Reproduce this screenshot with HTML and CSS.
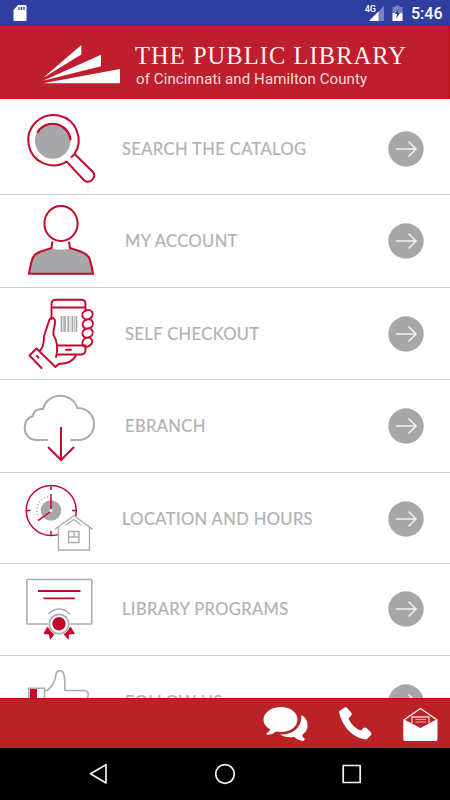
FILE: index.html
```html
<!DOCTYPE html>
<html lang="en">
<head>
<meta charset="utf-8">
<title>The Public Library</title>
<link rel="stylesheet" href="styles.css">
</head>
<body>
<div class="screen">
  <div class="status">
    <svg class="sd" width="14" height="18" viewBox="0 0 14 18"><path d="M5 1h7.500q1 0 1 1v14q0 1-1 1h-11q-1 0-1-1V6z" fill="#fff"/><path d="M6 3v3M8.500 3v3M11 3v3" stroke="#303f9f" stroke-width="1.300"/></svg>
    <span class="net">4G</span>
    <svg class="signal" width="15" height="15" viewBox="0 0 15 15"><path d="M0 15L15 0v15z" fill="#7983c2"/><path d="M0 15L9.500 5.500V15z" fill="#fff"/></svg>
    <svg class="battery" width="11" height="16" viewBox="0 0 11 16"><path d="M.5 2h3V.5h4V2h3v14H.5z" fill="#7983c2"/><path d="M.5 8h10v8H.5z" fill="#fff"/><path d="M7 3L3 9h2.200L4 14l4-6H5.800z" fill="#303f9f"/></svg>
    <span class="clock">5:46</span>
  </div>
  <header class="brand">
    <svg class="mark" width="78" height="40" viewBox="43 45 78 40" fill="#fff"><path d="M43 78L81.300 45v9.500z"/><path d="M43 80.700L101 54.800v11.400z"/><path d="M43 83.300L120 69v14.300z"/></svg>
    <div class="brand-text">
      <div class="brand-name">THE PUBLIC LIBRARY</div>
      <div class="brand-sub">of Cincinnati and Hamilton County</div>
    </div>
  </header>
  <main class="menu">
    <div class="row search">
      <svg class="icon" width="110" height="95" viewBox="0 99 110 95"><g fill="none" stroke="#c4082c" stroke-width="2"><circle cx="52.700" cy="141" r="17.800" fill="#a7a7a9" stroke="none"/><path d="M37.800 132A17.800 17.800 0 0 1 70.500 139.500" stroke-width="2.200" stroke-linecap="round"/><path d="M71 157.500L74.300 154.300A25.200 25.200 0 1 0 66.700 161.600L84 180.200Q88 183.500 92 180Q96 176 93 172L74.800 154.300" stroke-linejoin="round"/></g></svg>
      <span class="label">SEARCH THE CATALOG</span>
      <svg class="go" width="36" height="36" viewBox="0 0 36 36"><circle cx="18" cy="18" r="17.700"/><path d="M8 18h20M20.500 10.500L28 18l-7.500 7.500"/></svg>
    </div>
    <div class="row account">
      <svg class="icon" width="110" height="92" viewBox="0 195 110 92"><path d="M51 248.500C46 251.500 36 251.500 33 258Q31 262 29 273.500H93Q91 262 89 258C85 251.500 75 251.500 70 248.500Q61 251 51 248.500" fill="#a7a7a9"/><g fill="none" stroke="#c4082c" stroke-width="2"><ellipse cx="61" cy="223.500" rx="16.600" ry="17.500"/><path d="M52.500 241.500L51.500 248C45 250.500 36 251 33 257.500Q31 262 29 273.700H93Q91 262 89 257.500C85 251 76 250.500 70 248L69 241.500"/></g></svg>
      <span class="label">MY ACCOUNT</span>
      <svg class="go" width="36" height="36" viewBox="0 0 36 36"><circle cx="18" cy="18" r="17.700"/><path d="M8 18h20M20.500 10.500L28 18l-7.500 7.500"/></svg>
    </div>
    <div class="row checkout">
      <svg class="icon" width="110" height="91" viewBox="0 288 110 91"><g fill="none" stroke="#c4082c" stroke-width="1.900" stroke-linecap="round" stroke-linejoin="round"><path d="M51.500 319V304Q51.500 299.700 56 299.700H81Q85.500 299.700 85.500 304V311M51.500 307.500H85.500M57.500 345.500H85.500M85.500 347V350Q85.500 354.500 81 354.500H57M66 349.700H71"/><ellipse cx="87.500" cy="314.700" rx="5.300" ry="4.500" transform="rotate(-25 87.500 314.700)"/><ellipse cx="87.800" cy="324" rx="5.300" ry="4.500" transform="rotate(-25 87.800 324)"/><ellipse cx="87.600" cy="333" rx="5.300" ry="4.500" transform="rotate(-25 87.600 333)"/><ellipse cx="87.300" cy="342.200" rx="5.200" ry="4.200" transform="rotate(-35 87.300 342.200)"/><path d="M56 357C58 349 58 342 53.500 335C52.500 331 55.500 325 55 321Q54.500 317.500 51.500 318Q50 318 49 321L44 336Q44 347 40 350.500M41.500 368L29.500 355.500L36.500 348.500L55.500 367L59 363.800C67 364 73 361 76 355.500M37 356L38.500 357.500"/></g><path d="M61.500 316v16M65 316v16M68.200 316v16M72.500 316v16M76.500 316v16" stroke="#aaa" stroke-width="1.800"/><path d="M63.500 316v16M70.200 316v16M74.500 316v16" stroke="#bbb" stroke-width=".8"/></svg>
      <span class="label">SELF CHECKOUT</span>
      <svg class="go" width="36" height="36" viewBox="0 0 36 36"><circle cx="18" cy="18" r="17.700"/><path d="M8 18h20M20.500 10.500L28 18l-7.500 7.500"/></svg>
    </div>
    <div class="row ebranch">
      <svg class="icon" width="110" height="92" viewBox="0 380 110 92"><g fill="none" stroke-width="2"><path d="M48 440H37C28.500 440 24.700 434 24.700 428C24.700 422 28 417.500 33 416C33.500 411 37.500 408.500 43 409C45 401 52 395.700 60.500 395.700C68 395.700 75 400.500 77.300 408C87 408 94 414.500 94 424C94 433.500 87 440 79 440H70.500" stroke="#acacae"/><path d="M61 427V460M48 447L61 460L74 447" stroke="#c4082c"/></g></svg>
      <span class="label">EBRANCH</span>
      <svg class="go" width="36" height="36" viewBox="0 0 36 36"><circle cx="18" cy="18" r="17.700"/><path d="M8 18h20M20.500 10.500L28 18l-7.500 7.500"/></svg>
    </div>
    <div class="row location">
      <svg class="icon" width="110" height="90" viewBox="0 473 110 90"><circle cx="51" cy="510.500" r="10.300" fill="#a7a7a9"/><g fill="none" stroke="#c4082c" stroke-width="1.500"><circle cx="51.200" cy="510.500" r="25"/><path d="M51 485.500v4.500M51 531v4.500M26 510.500h4.500M72 510.500h4.500M51 494v15M50 512L38 520.700"/></g><path d="M48 496.700A14 14 0 0 0 38.500 517" fill="none" stroke="#b0b0b2" stroke-width="1.500" stroke-dasharray="1.200 2"/><circle cx="51" cy="510.500" r="1.500" fill="#fff"/><path d="M58.500 526L74 515L89.500 526V550H58.500z" fill="#fff"/><g fill="none" stroke="#acacae" stroke-width="1.400"><path d="M54.500 529.500L74 515.500L92.800 529.500M58.500 527V550H89.500V527M66 525L74 519.500L81 525M68.500 531.500H79V542.500H68.500zM74 531.500V537M68.500 537H79"/></g></svg>
      <span class="label">LOCATION AND HOURS</span>
      <svg class="go" width="36" height="36" viewBox="0 0 36 36"><circle cx="18" cy="18" r="17.700"/><path d="M8 18h20M20.500 10.500L28 18l-7.500 7.500"/></svg>
    </div>
    <div class="row programs">
      <svg class="icon" width="110" height="91" viewBox="0 564 110 91"><rect x="26.800" y="579.500" width="65" height="44.500" rx="1" fill="none" stroke="#acacae" stroke-width="1.600"/><path d="M38 591H80.500M43.500 598.300H75" stroke="#c4082c" stroke-width="1.800"/><path d="M47 627L43.300 634L49 634.500L50 640L57 631zM71 627L75 634L69 634.500L68.500 640L61 631z" fill="#c4082c"/><circle cx="59" cy="624" r="11" fill="#fff"/><path d="M48.500 614Q59 604 70 614" fill="none" stroke="#acacae" stroke-width="1.500"/><circle cx="59" cy="624" r="9.700" fill="#fff" stroke="#acacae" stroke-width="1.700"/><circle cx="59" cy="623.700" r="6.700" fill="#c4082c"/></svg>
      <span class="label">LIBRARY PROGRAMS</span>
      <svg class="go" width="36" height="36" viewBox="0 0 36 36"><circle cx="18" cy="18" r="17.700"/><path d="M8 18h20M20.500 10.500L28 18l-7.500 7.500"/></svg>
    </div>
    <div class="row follow">
      <svg class="icon" width="110" height="92" viewBox="0 656 110 92"><path d="M30 689h7v30h-7z" fill="#c4082c"/><path d="M28.800 720V688.200H44.500V720M44.500 691C50 690 55.500 682 56 674.500C56.500 669.500 63 669.500 64 675C65.500 681 64.500 686 65 690.500H84Q90 691 87.500 698V720" fill="none" stroke="#acacae" stroke-width="1.600"/></svg>
      <span class="label">FOLLOW US</span>
      <svg class="go" width="36" height="36" viewBox="0 0 36 36"><circle cx="18" cy="18" r="17.700"/><path d="M8 18h20M20.500 10.500L28 18l-7.500 7.500"/></svg>
    </div>
  </main>
  <div class="actions">
    <svg width="46" height="36" viewBox="262 705 46 36" fill="#fff"><path d="M301.500 714C310 719 309 730 302.500 733.500Q302 736 305 738L303.500 740Q297 739 294.500 736C288 737 283 735.500 280 733.500C292 733.500 301.500 728 301.500 714z"/><path d="M281 706C290.500 706 297.500 711.500 297.500 718.500C297.500 725.500 290.500 731 281 731L276 730.500Q273 733.500 267 734L266.500 732Q270 730.500 270 728C266 726 263.500 722.500 263.500 718.500C263.500 711.500 271.500 706 281 706z"/></svg>
    <svg width="34" height="34" viewBox="338 705 34 34" fill="#fff"><path d="M344.500 706.500Q346 705.700 347.200 707L351.500 712Q352.300 713.300 351.200 714.500L348.500 717.500C351 723 355 727.500 361 729.500L363.500 727Q365 725.800 366.500 727L371 731.500Q372.200 733 371 734L367.500 737.500Q366 739 363 738C350 735 341.500 723 339 711Q339 710 340 709.500z"/></svg>
    <svg width="36" height="36" viewBox="402 705 36 36"><path d="M404.500 718.500L420.500 707.500L436.500 718.500" fill="none" stroke="#fff" stroke-width="1.300"/><path d="M412 722V716H429V722" fill="none" stroke="#f3cccd" stroke-width="1.300"/><path d="M415.500 718.500H426M415.500 721H426" stroke="#eab5b7" stroke-width="1"/><path d="M403.300 718L420.500 727L437.500 718V738Q437.500 740 435.500 740H405.300Q403.300 740 403.300 738z" fill="#fff"/></svg>
  </div>
  <nav class="sysnav">
    <svg width="270" height="22" viewBox="90 763 270 22" fill="none" stroke="#f4f4f4" stroke-width="1.700" stroke-linejoin="round"><path d="M90.500 773.800L106 764.700V783z"/><circle cx="225" cy="774" r="9.300"/><rect x="343.200" y="765.500" width="17" height="17"/></svg>
  </nav>
</div>
</body>
</html>
```
FILE: styles.css
```css
* { box-sizing: border-box; }
body { margin: 0; background: #fff; font-family: Lato, sans-serif; }
svg { display: block; flex: none; overflow: visible; }
.screen { width: 450px; height: 800px; display: flex; flex-direction: column; overflow: hidden; }

.status { height: 26px; flex: none; display: flex; align-items: flex-start; background: #303f9f; color: #fff; font-family: Roboto, sans-serif; }
.sd { margin: 4px 0 0 13px; }
.net { margin: 4px 0 0 auto; font-size: 9px; line-height: 10px; font-weight: 500; }
.signal { margin: 6px 0 0 -7px; }
.battery { margin: 5px 8px 0 8px; }
.clock { width: 39px; font-size: 16px; line-height: 28px; font-weight: 500; }

.brand { height: 73px; flex: none; display: flex; background: #be1e2d; border-bottom: 1px solid #b80a12; border-right: 1px solid #c00c18; color: #fff; padding-left: 43px; }
.mark { margin-top: 19px; }
.brand-text { margin: 16px 0 0 14px; white-space: nowrap; }
.brand-name { font-family: "Liberation Serif", serif; font-size: 24.500px; line-height: 27px; letter-spacing: 1.050px; color: #fdf0f0; }
.brand-sub { margin-left: 1px; font-family: Roboto, sans-serif; font-size: 15px; line-height: 20px; letter-spacing: .1px; color: #f7dcde; }

.menu { flex: 1; min-height: 0; overflow: hidden; }
.row { height: 93px; display: flex; align-items: center; padding-right: 26px; border-bottom: 1px solid #cfcfcf; }
.icon { align-self: flex-start; }
.label { margin-left: 15px; font-size: 16.500px; line-height: 20px; letter-spacing: .4px; -webkit-text-stroke: .2px #b1b1b3; color: #b1b1b3; white-space: nowrap; }
.go { margin-left: auto; }
.go circle { fill: #a7a7a9; }
.go path { fill: none; stroke: #f2f2f2; stroke-width: 1.500; }
.search { height: 96px; }
.search .label { margin: 4px 0 0 12px; }
.search .go { margin-top: 4px; }
.checkout, .programs { height: 92px; }
.location { height: 91px; }
.location .label { margin: 2px 0 0 12px; }
.location .go { margin-top: 2px; }
.programs .label { margin: 0 0 2px 12px; }
.programs .go { margin-bottom: 2px; }
.follow .label { margin-bottom: 1px; }

.actions { height: 50px; flex: none; display: flex; justify-content: flex-end; gap: 30px; padding: 7px 12px 0 0; background: #bb2228; border-top: 1px solid #b90c05; }
.sysnav { height: 52px; flex: none; display: flex; justify-content: center; align-items: center; background: #000; }
```
